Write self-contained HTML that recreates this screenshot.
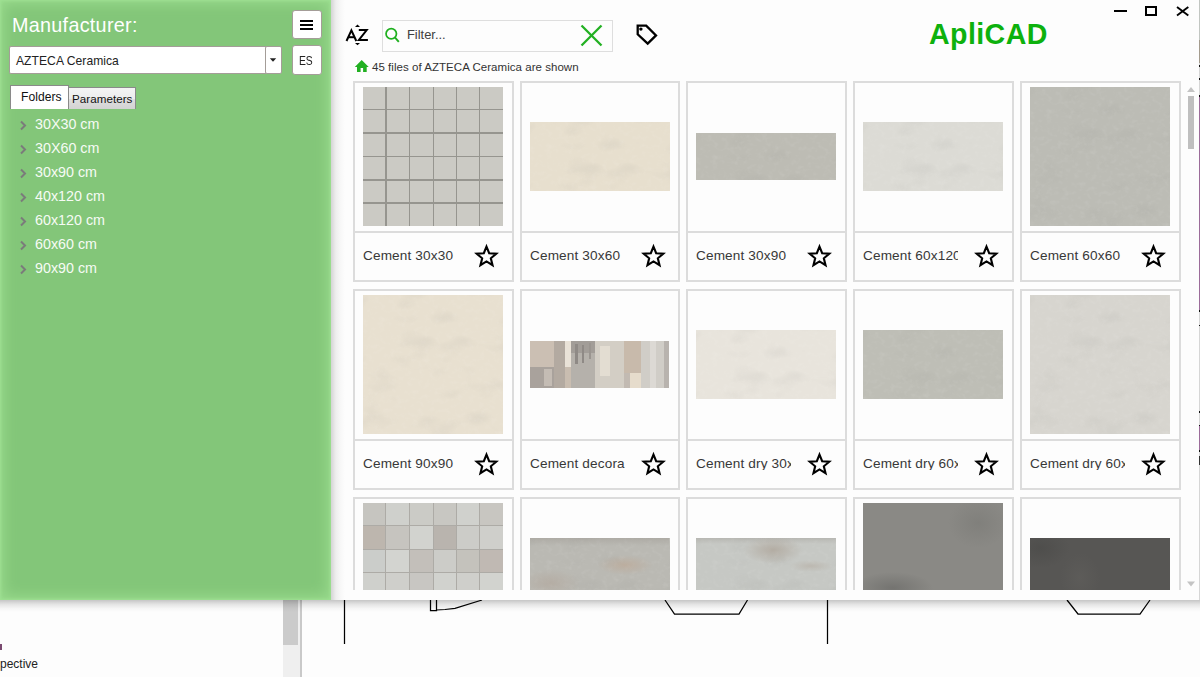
<!DOCTYPE html>
<html><head><meta charset="utf-8">
<style>
*{box-sizing:border-box;margin:0;padding:0}
html,body{width:1200px;height:677px;overflow:hidden;background:#fdfdfd;font-family:"Liberation Sans",sans-serif;position:relative}
.abs{position:absolute}
/* background app */
#bg{position:absolute;left:0;top:0;width:1200px;height:677px;background:#fdfdfd}
/* right panel */
#rp{position:absolute;left:331px;top:0;width:867px;height:600px;background:#fdfdfd;overflow:hidden}
#rpshadow{position:absolute;left:331px;top:0;width:14px;height:600px;background:linear-gradient(to right,rgba(0,0,0,.16),rgba(0,0,0,.06) 35%,rgba(0,0,0,.02) 70%,rgba(0,0,0,0))}
#botshadow{position:absolute;left:0;top:600px;width:1200px;height:12px;background:linear-gradient(to bottom,rgba(0,0,0,.22),rgba(0,0,0,.1) 35%,rgba(0,0,0,.03) 70%,rgba(0,0,0,0))}
/* green panel */
#gp{position:absolute;left:0;top:0;width:331px;height:600px;background:#83c679;box-shadow:inset 0 0 3px 1px #9fe193,inset 0 0 13px 4px #98da8c}
.txt{position:absolute;white-space:nowrap;line-height:1}
.btn{position:absolute;background:#fff;border:1.5px solid #a49d98;border-radius:3px}
.card{position:absolute;border:2px solid #dcdcdc;background:#fdfdfd}
.card .sep{position:absolute;left:0;right:0;height:2px;background:#dcdcdc}
.lbl{position:absolute;white-space:nowrap;font-size:13.6px;letter-spacing:0.14px;color:#383838;line-height:1;overflow:hidden}
.star{position:absolute}
.img{position:absolute}
</style></head><body>
<svg width="0" height="0" style="position:absolute"><defs><filter id="tex" x="0" y="0" width="100%" height="100%"><feTurbulence type="fractalNoise" baseFrequency="0.18 0.22" numOctaves="2" seed="3" result="n"/><feColorMatrix in="n" type="matrix" values="0 0 0 0 1  0 0 0 0 1  0 0 0 0 1  0 0 0 -2.2 1.15"/></filter><filter id="tex2" x="0" y="0" width="100%" height="100%"><feTurbulence type="fractalNoise" baseFrequency="0.03 0.05" numOctaves="2" seed="11" result="n"/><feColorMatrix in="n" type="matrix" values="0 0 0 0 0.3  0 0 0 0 0.3  0 0 0 0 0.28  0 0 0 2.0 -1.05"/></filter></defs></svg>
<div id="bg">
  <!-- scrollbar at bottom left -->
  <div class="abs" style="left:283px;top:600px;width:17px;height:77px;background:#efefef"></div>
  <div class="abs" style="left:283px;top:600px;width:15px;height:45px;background:#cbcbcb"></div>
  <div class="abs" style="left:300px;top:600px;width:2px;height:77px;background:#c9c9c9"></div>
  <div class="txt" style="left:0px;top:658px;font-size:12px;color:#222">pective</div>
  <div class="abs" style="left:0;top:644px;width:2px;height:6px;background:#7a4a70"></div>
  <svg class="abs" style="left:0;top:0" width="1200" height="677">
    <g stroke="#000" stroke-width="1.25" fill="none">
      <line x1="344.5" y1="600" x2="344.5" y2="644"/>
      <line x1="827.5" y1="600" x2="827.5" y2="644"/>
      <polyline points="430.5,600 430.5,610.5 436.5,610.5 436.5,600"/>
      <polyline points="436.5,610 445,609.5 455,608.3 482,600"/>
      <polyline points="665,600 674.5,614 739,614 747.5,600"/>
      <polyline points="1067,600 1078,614 1140,614 1150,600"/>
    </g>
  </svg>
</div>
<div class="abs" style="left:1199px;top:0;width:1px;height:600px;background:#d6d6d6"></div>
<div class="abs" style="left:1199px;top:0;width:1px;height:40px;background:#c2c6c2"></div>
<div class="abs" style="left:1199px;top:40px;width:1px;height:23px;background:#a49c8e"></div>
<div class="abs" style="left:1199px;top:65px;width:1px;height:2px;background:#111"></div>
<div class="abs" style="left:1199px;top:78px;width:1px;height:2px;background:#111"></div>
<div class="abs" style="left:1199px;top:95px;width:1px;height:2px;background:#111"></div>
<div class="abs" style="left:1199px;top:97px;width:1px;height:213px;background:#9c6c9a"></div>
<div class="abs" style="left:1199px;top:310px;width:1px;height:2px;background:#111"></div>
<div class="abs" style="left:1199px;top:325px;width:1px;height:1px;background:#111"></div>
<div class="abs" style="left:1199px;top:411px;width:1px;height:2px;background:#111"></div>
<div class="abs" style="left:1199px;top:425px;width:1px;height:1px;background:#111"></div>
<div class="abs" style="left:1199px;top:426px;width:1px;height:24px;background:#9c6c9a"></div>
<div class="abs" style="left:1199px;top:450px;width:1px;height:2px;background:#111"></div>
<div class="abs" style="left:1199px;top:456px;width:1px;height:9px;background:#333"></div>
<div id="botshadow"></div>

<div id="rp">
  <!-- toolbar (coords relative to 331,0) -->
  <svg class="abs" style="left:0px;top:20px" width="40" height="30" viewBox="331 20 40 30"><g fill="none" stroke="#000" stroke-width="2"><polyline points="346.5,41 351.4,30.4 356.3,41" stroke-linejoin="miter"/><line x1="348.2" y1="37.2" x2="354.6" y2="37.2"/><polyline points="358.8,30.1 366.7,30.1 358.9,39.9 367.9,39.9" stroke-linejoin="miter"/></g><polygon points="357.5,24.6 360,26.9 355,26.9" fill="#000"/><polygon points="357.5,45.3 360,43 355,43" fill="#000"/></svg>
  <div class="abs" style="left:51px;top:20px;width:231px;height:31.5px;border:1px solid #dedede;background:#fdfdfd"></div>
  <svg class="abs" style="left:52.6px;top:25.2px" width="20" height="20"><circle cx="7.25" cy="8.7" r="5.2" fill="none" stroke="#1fb01f" stroke-width="1.75"/><line x1="10.9" y1="12.4" x2="14.8" y2="16.8" stroke="#1fb01f" stroke-width="1.9"/></svg>
  <div class="txt" style="left:76px;top:29.2px;font-size:12.9px;letter-spacing:0px;color:#404040">Filter...</div>
  <svg class="abs" style="left:248px;top:23px" width="25" height="25"><g stroke="#22b022" stroke-width="2.3"><line x1="2.5" y1="2.5" x2="22.5" y2="22.5"/><line x1="22.5" y1="2.5" x2="2.5" y2="22.5"/></g></svg>
  <svg class="abs" style="left:301px;top:20px" width="30" height="30"><path d="M5.7 5.7 L14.2 5.7 L24 15.4 L15.7 23.6 L5.7 14.3 Z" fill="none" stroke="#000" stroke-width="2.3" stroke-linejoin="miter"/><circle cx="8.9" cy="9.1" r="1.7" fill="#000"/></svg>
  <svg class="abs" style="left:23px;top:58px" width="16" height="16"><path d="M0.8 9 L7.7 2 L14.7 9 L12.7 9 L12.7 13.9 L9.1 13.9 L9.1 10.1 L6.6 10.1 L6.6 13.9 L3 13.9 L3 9 Z" fill="#22b022"/></svg>
  <div class="txt" style="left:41px;top:62px;font-size:11.5px;letter-spacing:0.04px;color:#333">45 files of AZTECA Ceramica are shown</div>
  <div class="txt" style="left:598px;top:20px;font-size:28.6px;font-weight:bold;letter-spacing:0.4px;color:#0db10d">ApliCAD</div>
  <!-- window controls -->
  <div class="abs" style="left:782.5px;top:10px;width:13px;height:2px;background:#000"></div>
  <div class="abs" style="left:814px;top:6px;width:12px;height:9.5px;border:2px solid #000"></div>
  <svg class="abs" style="left:845px;top:6px" width="15" height="12"><g stroke="#000" stroke-width="1.9"><line x1="1" y1="1" x2="12.3" y2="9.6"/><line x1="12.3" y1="1" x2="1" y2="9.6"/></g></svg>
  <!-- scrollbar -->
  <svg class="abs" style="left:855px;top:86px" width="10" height="6"><polygon points="1,6 5,1 9,6" fill="#c4c4c4"/></svg>
  <div class="abs" style="left:857px;top:96px;width:6px;height:52.5px;background:#bfbfbf"></div>
  <svg class="abs" style="left:855px;top:580.8px" width="10" height="6"><polygon points="1,0.5 9,0.5 5,5.5" fill="#c4c4c4"/></svg>
  <div id="cards" class="abs" style="left:0;top:0;width:867px;height:590px;overflow:hidden">
<div class="card" style="left:22px;top:81px;width:161px;height:201px"><div class="sep" style="top:148px"></div></div>
<div class="img" style="left:32px;top:87px;width:140px;height:139px;background:#96958f;overflow:hidden"><div class="abs" style="left:0.00px;top:0.00px;width:22.10px;height:21.80px;background:#cbcac4"></div><div class="abs" style="left:23.50px;top:0.00px;width:22.25px;height:21.80px;background:#cbcac4"></div><div class="abs" style="left:47.15px;top:0.00px;width:22.45px;height:21.80px;background:#cbcac4"></div><div class="abs" style="left:71.00px;top:0.00px;width:21.80px;height:21.80px;background:#cbcac4"></div><div class="abs" style="left:94.20px;top:0.00px;width:21.80px;height:21.80px;background:#cbcac4"></div><div class="abs" style="left:117.40px;top:0.00px;width:22.60px;height:21.80px;background:#cbcac4"></div><div class="abs" style="left:0.00px;top:23.20px;width:22.10px;height:22.10px;background:#cbcac4"></div><div class="abs" style="left:23.50px;top:23.20px;width:22.25px;height:22.10px;background:#cbcac4"></div><div class="abs" style="left:47.15px;top:23.20px;width:22.45px;height:22.10px;background:#cbcac4"></div><div class="abs" style="left:71.00px;top:23.20px;width:21.80px;height:22.10px;background:#cbcac4"></div><div class="abs" style="left:94.20px;top:23.20px;width:21.80px;height:22.10px;background:#cbcac4"></div><div class="abs" style="left:117.40px;top:23.20px;width:22.60px;height:22.10px;background:#cbcac4"></div><div class="abs" style="left:0.00px;top:46.70px;width:22.10px;height:22.10px;background:#cbcac4"></div><div class="abs" style="left:23.50px;top:46.70px;width:22.25px;height:22.10px;background:#cbcac4"></div><div class="abs" style="left:47.15px;top:46.70px;width:22.45px;height:22.10px;background:#cbcac4"></div><div class="abs" style="left:71.00px;top:46.70px;width:21.80px;height:22.10px;background:#cbcac4"></div><div class="abs" style="left:94.20px;top:46.70px;width:21.80px;height:22.10px;background:#cbcac4"></div><div class="abs" style="left:117.40px;top:46.70px;width:22.60px;height:22.10px;background:#cbcac4"></div><div class="abs" style="left:0.00px;top:70.20px;width:22.10px;height:22.00px;background:#cbcac4"></div><div class="abs" style="left:23.50px;top:70.20px;width:22.25px;height:22.00px;background:#cbcac4"></div><div class="abs" style="left:47.15px;top:70.20px;width:22.45px;height:22.00px;background:#cbcac4"></div><div class="abs" style="left:71.00px;top:70.20px;width:21.80px;height:22.00px;background:#cbcac4"></div><div class="abs" style="left:94.20px;top:70.20px;width:21.80px;height:22.00px;background:#cbcac4"></div><div class="abs" style="left:117.40px;top:70.20px;width:22.60px;height:22.00px;background:#cbcac4"></div><div class="abs" style="left:0.00px;top:93.60px;width:22.10px;height:21.90px;background:#cbcac4"></div><div class="abs" style="left:23.50px;top:93.60px;width:22.25px;height:21.90px;background:#cbcac4"></div><div class="abs" style="left:47.15px;top:93.60px;width:22.45px;height:21.90px;background:#cbcac4"></div><div class="abs" style="left:71.00px;top:93.60px;width:21.80px;height:21.90px;background:#cbcac4"></div><div class="abs" style="left:94.20px;top:93.60px;width:21.80px;height:21.90px;background:#cbcac4"></div><div class="abs" style="left:117.40px;top:93.60px;width:22.60px;height:21.90px;background:#cbcac4"></div><div class="abs" style="left:0.00px;top:116.90px;width:22.10px;height:22.10px;background:#cbcac4"></div><div class="abs" style="left:23.50px;top:116.90px;width:22.25px;height:22.10px;background:#cbcac4"></div><div class="abs" style="left:47.15px;top:116.90px;width:22.45px;height:22.10px;background:#cbcac4"></div><div class="abs" style="left:71.00px;top:116.90px;width:21.80px;height:22.10px;background:#cbcac4"></div><div class="abs" style="left:94.20px;top:116.90px;width:21.80px;height:22.10px;background:#cbcac4"></div><div class="abs" style="left:117.40px;top:116.90px;width:22.60px;height:22.10px;background:#cbcac4"></div></div>
<div class="lbl" style="left:32px;top:248.5px;width:95px">Cement 30x30</div>
<svg class="star" style="left:143px;top:243px" width="26" height="26" viewBox="0 0 26 26"><polygon points="12.50,3.60 15.17,10.22 22.30,10.72 16.83,15.31 18.55,22.23 12.50,18.45 6.45,22.23 8.17,15.31 2.70,10.72 9.83,10.22" fill="none" stroke="#000" stroke-width="2.1" stroke-linejoin="miter"/></svg>
<div class="card" style="left:189px;top:81px;width:160px;height:201px"><div class="sep" style="top:148px"></div></div>
<div class="img" style="left:199px;top:122px;width:140px;height:69px;background:#e7dfce;overflow:hidden"><svg width="140" height="139" style="position:absolute;left:0;top:0"><rect width="140" height="139" filter="url(#tex2)" opacity="0.16"/><rect width="140" height="139" filter="url(#tex)" opacity="0.08"/></svg></div>
<div class="lbl" style="left:199px;top:248.5px;width:95px">Cement 30x60</div>
<svg class="star" style="left:310px;top:243px" width="26" height="26" viewBox="0 0 26 26"><polygon points="12.50,3.60 15.17,10.22 22.30,10.72 16.83,15.31 18.55,22.23 12.50,18.45 6.45,22.23 8.17,15.31 2.70,10.72 9.83,10.22" fill="none" stroke="#000" stroke-width="2.1" stroke-linejoin="miter"/></svg>
<div class="card" style="left:355px;top:81px;width:161px;height:201px"><div class="sep" style="top:148px"></div></div>
<div class="img" style="left:365px;top:133px;width:140px;height:47px;background:#bdbcb4;overflow:hidden"><svg width="140" height="139" style="position:absolute;left:0;top:0"><rect width="140" height="139" filter="url(#tex2)" opacity="0.16"/><rect width="140" height="139" filter="url(#tex)" opacity="0.08"/></svg></div>
<div class="lbl" style="left:365px;top:248.5px;width:95px">Cement 30x90</div>
<svg class="star" style="left:476px;top:243px" width="26" height="26" viewBox="0 0 26 26"><polygon points="12.50,3.60 15.17,10.22 22.30,10.72 16.83,15.31 18.55,22.23 12.50,18.45 6.45,22.23 8.17,15.31 2.70,10.72 9.83,10.22" fill="none" stroke="#000" stroke-width="2.1" stroke-linejoin="miter"/></svg>
<div class="card" style="left:522px;top:81px;width:161px;height:201px"><div class="sep" style="top:148px"></div></div>
<div class="img" style="left:532px;top:122px;width:140px;height:69px;background:#dcdbd5;overflow:hidden"><svg width="140" height="139" style="position:absolute;left:0;top:0"><rect width="140" height="139" filter="url(#tex2)" opacity="0.16"/><rect width="140" height="139" filter="url(#tex)" opacity="0.08"/></svg></div>
<div class="lbl" style="left:532px;top:248.5px;width:95px">Cement 60x120</div>
<svg class="star" style="left:643px;top:243px" width="26" height="26" viewBox="0 0 26 26"><polygon points="12.50,3.60 15.17,10.22 22.30,10.72 16.83,15.31 18.55,22.23 12.50,18.45 6.45,22.23 8.17,15.31 2.70,10.72 9.83,10.22" fill="none" stroke="#000" stroke-width="2.1" stroke-linejoin="miter"/></svg>
<div class="card" style="left:689px;top:81px;width:161px;height:201px"><div class="sep" style="top:148px"></div></div>
<div class="img" style="left:699px;top:87px;width:140px;height:139px;background:#bcbcb5;overflow:hidden"><svg width="140" height="139" style="position:absolute;left:0;top:0"><rect width="140" height="139" filter="url(#tex2)" opacity="0.16"/><rect width="140" height="139" filter="url(#tex)" opacity="0.08"/></svg></div>
<div class="lbl" style="left:699px;top:248.5px;width:95px">Cement 60x60</div>
<svg class="star" style="left:810px;top:243px" width="26" height="26" viewBox="0 0 26 26"><polygon points="12.50,3.60 15.17,10.22 22.30,10.72 16.83,15.31 18.55,22.23 12.50,18.45 6.45,22.23 8.17,15.31 2.70,10.72 9.83,10.22" fill="none" stroke="#000" stroke-width="2.1" stroke-linejoin="miter"/></svg>
<div class="card" style="left:22px;top:289px;width:161px;height:201px"><div class="sep" style="top:148px"></div></div>
<div class="img" style="left:32px;top:295px;width:140px;height:139px;background:#e8e0d0;overflow:hidden"><svg width="140" height="139" style="position:absolute;left:0;top:0"><rect width="140" height="139" filter="url(#tex2)" opacity="0.16"/><rect width="140" height="139" filter="url(#tex)" opacity="0.08"/></svg></div>
<div class="lbl" style="left:32px;top:456.5px;width:95px">Cement 90x90</div>
<svg class="star" style="left:143px;top:451px" width="26" height="26" viewBox="0 0 26 26"><polygon points="12.50,3.60 15.17,10.22 22.30,10.72 16.83,15.31 18.55,22.23 12.50,18.45 6.45,22.23 8.17,15.31 2.70,10.72 9.83,10.22" fill="none" stroke="#000" stroke-width="2.1" stroke-linejoin="miter"/></svg>
<div class="card" style="left:189px;top:289px;width:160px;height:201px"><div class="sep" style="top:148px"></div></div>
<div class="img" style="left:199px;top:341px;width:140px;height:47px;overflow:hidden"><div class="abs" style="left:0px;top:0px;width:27px;height:26px;background:#cbbfb3"></div><div class="abs" style="left:0px;top:26px;width:27px;height:21px;background:#a9a29c"></div><div class="abs" style="left:14px;top:28px;width:8px;height:17px;background:#c4bcb4"></div><div class="abs" style="left:24px;top:0px;width:11px;height:47px;background:#b3aaa1"></div><div class="abs" style="left:35px;top:0px;width:6px;height:26px;background:#e9e2d7"></div><div class="abs" style="left:35px;top:26px;width:6px;height:21px;background:#c9bdb0"></div><div class="abs" style="left:41px;top:0px;width:24px;height:47px;background:#b5b1ab"></div><div class="abs" style="left:41px;top:0px;width:24px;height:12px;background:#a29d98"></div><div class="abs" style="left:45px;top:3px;width:3px;height:20px;background:#8f8a86"></div><div class="abs" style="left:52px;top:4px;width:2px;height:18px;background:#8f8a86"></div><div class="abs" style="left:59px;top:2px;width:2px;height:16px;background:#9a9590"></div><div class="abs" style="left:65px;top:0px;width:29px;height:47px;background:#d3cec5"></div><div class="abs" style="left:70px;top:5px;width:10px;height:30px;background:#e3ddd2"></div><div class="abs" style="left:94px;top:0px;width:17px;height:32px;background:#c8baab"></div><div class="abs" style="left:94px;top:32px;width:6px;height:15px;background:#c2bab2"></div><div class="abs" style="left:100px;top:32px;width:11px;height:15px;background:#e6dccc"></div><div class="abs" style="left:111px;top:0px;width:28px;height:47px;background:#d0cdc7"></div><div class="abs" style="left:120px;top:0px;width:6px;height:47px;background:#dcd9d4"></div><div class="abs" style="left:134px;top:0px;width:5px;height:47px;background:#b8b3ae"></div></div>
<div class="lbl" style="left:199px;top:456.5px;width:95px">Cement decora</div>
<svg class="star" style="left:310px;top:451px" width="26" height="26" viewBox="0 0 26 26"><polygon points="12.50,3.60 15.17,10.22 22.30,10.72 16.83,15.31 18.55,22.23 12.50,18.45 6.45,22.23 8.17,15.31 2.70,10.72 9.83,10.22" fill="none" stroke="#000" stroke-width="2.1" stroke-linejoin="miter"/></svg>
<div class="card" style="left:355px;top:289px;width:161px;height:201px"><div class="sep" style="top:148px"></div></div>
<div class="img" style="left:365px;top:330px;width:140px;height:69px;background:#e8e4dc;overflow:hidden"><svg width="140" height="139" style="position:absolute;left:0;top:0"><rect width="140" height="139" filter="url(#tex2)" opacity="0.16"/><rect width="140" height="139" filter="url(#tex)" opacity="0.08"/></svg></div>
<div class="lbl" style="left:365px;top:456.5px;width:95px">Cement dry 30x90</div>
<svg class="star" style="left:476px;top:451px" width="26" height="26" viewBox="0 0 26 26"><polygon points="12.50,3.60 15.17,10.22 22.30,10.72 16.83,15.31 18.55,22.23 12.50,18.45 6.45,22.23 8.17,15.31 2.70,10.72 9.83,10.22" fill="none" stroke="#000" stroke-width="2.1" stroke-linejoin="miter"/></svg>
<div class="card" style="left:522px;top:289px;width:161px;height:201px"><div class="sep" style="top:148px"></div></div>
<div class="img" style="left:532px;top:330px;width:140px;height:69px;background:#bebeb6;overflow:hidden"><svg width="140" height="139" style="position:absolute;left:0;top:0"><rect width="140" height="139" filter="url(#tex2)" opacity="0.16"/><rect width="140" height="139" filter="url(#tex)" opacity="0.08"/></svg></div>
<div class="lbl" style="left:532px;top:456.5px;width:95px">Cement dry 60x120</div>
<svg class="star" style="left:643px;top:451px" width="26" height="26" viewBox="0 0 26 26"><polygon points="12.50,3.60 15.17,10.22 22.30,10.72 16.83,15.31 18.55,22.23 12.50,18.45 6.45,22.23 8.17,15.31 2.70,10.72 9.83,10.22" fill="none" stroke="#000" stroke-width="2.1" stroke-linejoin="miter"/></svg>
<div class="card" style="left:689px;top:289px;width:161px;height:201px"><div class="sep" style="top:148px"></div></div>
<div class="img" style="left:699px;top:295px;width:140px;height:139px;background:#d7d5cf;overflow:hidden"><svg width="140" height="139" style="position:absolute;left:0;top:0"><rect width="140" height="139" filter="url(#tex2)" opacity="0.16"/><rect width="140" height="139" filter="url(#tex)" opacity="0.08"/></svg></div>
<div class="lbl" style="left:699px;top:456.5px;width:95px">Cement dry 60x60</div>
<svg class="star" style="left:810px;top:451px" width="26" height="26" viewBox="0 0 26 26"><polygon points="12.50,3.60 15.17,10.22 22.30,10.72 16.83,15.31 18.55,22.23 12.50,18.45 6.45,22.23 8.17,15.31 2.70,10.72 9.83,10.22" fill="none" stroke="#000" stroke-width="2.1" stroke-linejoin="miter"/></svg>
<div class="card" style="left:22px;top:497px;width:161px;height:201px"><div class="sep" style="top:148px"></div></div>
<div class="img" style="left:32px;top:503px;width:140px;height:139px;background:#adaba6;overflow:hidden"><div class="abs" style="left:0.00px;top:0.00px;width:22.18px;height:21.98px;background:#c6c5c0"></div><div class="abs" style="left:23.43px;top:0.00px;width:22.40px;height:21.98px;background:#cfd0cc"></div><div class="abs" style="left:47.08px;top:0.00px;width:22.60px;height:21.98px;background:#cbcbc6"></div><div class="abs" style="left:70.92px;top:0.00px;width:21.95px;height:21.98px;background:#c8c7c2"></div><div class="abs" style="left:94.12px;top:0.00px;width:21.95px;height:21.98px;background:#d0d1cd"></div><div class="abs" style="left:117.33px;top:0.00px;width:22.67px;height:21.98px;background:#c8c6c1"></div><div class="abs" style="left:0.00px;top:23.23px;width:22.18px;height:22.35px;background:#bdb6ae"></div><div class="abs" style="left:23.43px;top:23.23px;width:22.40px;height:22.35px;background:#c6c4bf"></div><div class="abs" style="left:47.08px;top:23.23px;width:22.60px;height:22.35px;background:#d2d3cf"></div><div class="abs" style="left:70.92px;top:23.23px;width:21.95px;height:22.35px;background:#b9b4ae"></div><div class="abs" style="left:94.12px;top:23.23px;width:21.95px;height:22.35px;background:#ccccc8"></div><div class="abs" style="left:117.33px;top:23.23px;width:22.67px;height:22.35px;background:#cfcfcb"></div><div class="abs" style="left:0.00px;top:46.83px;width:22.18px;height:22.35px;background:#cbcdca"></div><div class="abs" style="left:23.43px;top:46.83px;width:22.40px;height:22.35px;background:#d3d4d0"></div><div class="abs" style="left:47.08px;top:46.83px;width:22.60px;height:22.35px;background:#c3bfba"></div><div class="abs" style="left:70.92px;top:46.83px;width:21.95px;height:22.35px;background:#ccccc8"></div><div class="abs" style="left:94.12px;top:46.83px;width:21.95px;height:22.35px;background:#c4c2bc"></div><div class="abs" style="left:117.33px;top:46.83px;width:22.67px;height:22.35px;background:#c0b9b3"></div><div class="abs" style="left:0.00px;top:70.42px;width:22.18px;height:22.15px;background:#cfd0cc"></div><div class="abs" style="left:23.43px;top:70.42px;width:22.40px;height:22.15px;background:#cfcfcb"></div><div class="abs" style="left:47.08px;top:70.42px;width:22.60px;height:22.15px;background:#c8c6c2"></div><div class="abs" style="left:70.92px;top:70.42px;width:21.95px;height:22.15px;background:#d1d2ce"></div><div class="abs" style="left:94.12px;top:70.42px;width:21.95px;height:22.15px;background:#cfcfcb"></div><div class="abs" style="left:117.33px;top:70.42px;width:22.67px;height:22.15px;background:#d2d3cf"></div><div class="abs" style="left:0.00px;top:93.83px;width:22.18px;height:22.15px;background:#cfd0cc"></div><div class="abs" style="left:23.43px;top:93.83px;width:22.40px;height:22.15px;background:#cfd0cc"></div><div class="abs" style="left:47.08px;top:93.83px;width:22.60px;height:22.15px;background:#cfd0cc"></div><div class="abs" style="left:70.92px;top:93.83px;width:21.95px;height:22.15px;background:#cfd0cc"></div><div class="abs" style="left:94.12px;top:93.83px;width:21.95px;height:22.15px;background:#cfd0cc"></div><div class="abs" style="left:117.33px;top:93.83px;width:22.67px;height:22.15px;background:#cfd0cc"></div><div class="abs" style="left:0.00px;top:117.22px;width:22.18px;height:21.78px;background:#cfd0cc"></div><div class="abs" style="left:23.43px;top:117.22px;width:22.40px;height:21.78px;background:#cfd0cc"></div><div class="abs" style="left:47.08px;top:117.22px;width:22.60px;height:21.78px;background:#cfd0cc"></div><div class="abs" style="left:70.92px;top:117.22px;width:21.95px;height:21.78px;background:#cfd0cc"></div><div class="abs" style="left:94.12px;top:117.22px;width:21.95px;height:21.78px;background:#cfd0cc"></div><div class="abs" style="left:117.33px;top:117.22px;width:22.67px;height:21.78px;background:#cfd0cc"></div></div>
<div class="card" style="left:189px;top:497px;width:160px;height:201px"><div class="sep" style="top:148px"></div></div>
<div class="img" style="left:199px;top:538px;width:140px;height:69px;background:#bab9b3;overflow:hidden"><svg width="140" height="139" style="position:absolute;left:0;top:0"><rect width="140" height="139" filter="url(#tex2)" opacity="0.16"/><rect width="140" height="139" filter="url(#tex)" opacity="0.08"/></svg></div>
<div class="card" style="left:355px;top:497px;width:161px;height:201px"><div class="sep" style="top:148px"></div></div>
<div class="img" style="left:365px;top:538px;width:140px;height:69px;background:#c6c8c4;overflow:hidden"><svg width="140" height="139" style="position:absolute;left:0;top:0"><rect width="140" height="139" filter="url(#tex2)" opacity="0.16"/><rect width="140" height="139" filter="url(#tex)" opacity="0.08"/></svg></div>
<div class="card" style="left:522px;top:497px;width:161px;height:201px"><div class="sep" style="top:148px"></div></div>
<div class="img" style="left:532px;top:503px;width:140px;height:139px;background:#8a8985"></div>
<div class="card" style="left:689px;top:497px;width:161px;height:201px"><div class="sep" style="top:148px"></div></div>
<div class="img" style="left:699px;top:538px;width:140px;height:69px;background:#575654"></div>
<div class="img" style="left:199px;top:538px;width:139px;height:52px;background:radial-gradient(ellipse 28px 10px at 95px 27px, rgba(190,160,135,.45), rgba(190,160,135,0)), radial-gradient(ellipse 30px 14px at 20px 45px, rgba(170,150,135,.35), rgba(170,150,135,0)), linear-gradient(rgba(150,145,138,.35), rgba(150,145,138,0) 8px)"></div>
<div class="img" style="left:365px;top:538px;width:140px;height:52px;background:radial-gradient(ellipse 30px 14px at 77px 12px, rgba(160,145,130,.5), rgba(160,145,130,0)), radial-gradient(ellipse 22px 6px at 115px 28px, rgba(170,155,140,.35), rgba(170,155,140,0)), linear-gradient(rgba(150,145,138,.3), rgba(150,145,138,0) 6px)"></div>
<div class="img" style="left:532px;top:503px;width:140px;height:87px;background:radial-gradient(ellipse 40px 16px at 30px 85px, rgba(90,90,88,.45), rgba(90,90,88,0)), radial-gradient(ellipse 30px 25px at 115px 20px, rgba(110,110,106,.35), rgba(110,110,106,0))"></div>
<div class="img" style="left:699px;top:538px;width:140px;height:52px;background:radial-gradient(ellipse 30px 20px at 10px 10px, rgba(70,70,68,.5), rgba(70,70,68,0)), radial-gradient(ellipse 20px 25px at 50px 40px, rgba(110,108,104,.25), rgba(110,108,104,0))"></div>
</div>
</div>
</div>
</div>
</div>
</div>
</div>
</div>
</div>
</div>
</div>
</div>
</div>
</div>
</div>
</div>
</div>
</div>
</div>
</div>
<div id="rpshadow"></div>

<div id="gp">
  <div class="txt" style="left:12px;top:16.3px;font-size:19.8px;letter-spacing:0.28px;color:#fff">Manufacturer:</div>
  <div class="btn" style="left:292px;top:10px;width:30px;height:29px">
    <div class="abs" style="left:7px;top:8.5px;width:13px;height:2px;background:#000"></div>
    <div class="abs" style="left:7px;top:12.5px;width:13px;height:2px;background:#000"></div>
    <div class="abs" style="left:7px;top:16.5px;width:13px;height:2px;background:#000"></div>
  </div>
  <div class="btn" style="left:9px;top:46px;width:256.5px;height:28px;border-radius:2px;border-right:none;border-top-right-radius:0;border-bottom-right-radius:0"></div>
  <div class="txt" style="left:16px;top:55px;font-size:12.1px;letter-spacing:0.05px;color:#222">AZTECA Ceramica</div>
  <div class="btn" style="left:265px;top:46px;width:17px;height:28px;border-radius:2px"></div>
  <svg class="abs" style="left:268px;top:57px" width="10" height="6"><polygon points="1.8,1.2 8.2,1.2 5,4.8" fill="#222"/></svg>
  <div class="btn" style="left:292px;top:45px;width:30px;height:30px">
    <div class="txt" style="left:6.3px;top:8.6px;font-size:12.6px;letter-spacing:-0.2px;color:#222;transform:scaleX(0.82);transform-origin:0 0">ES</div>
  </div>
  <!-- tabs -->
  <div class="abs" style="left:68px;top:87px;width:68px;height:21.5px;border:1px solid #8a8a8a;border-bottom:none;background:linear-gradient(#f4f4f4,#ededed 50%,#dedede 54%,#d3d3d3)"></div>
  <div class="txt" style="left:72px;top:92.8px;font-size:11.6px;letter-spacing:0.05px;color:#111">Parameters</div>
  <div class="abs" style="left:10px;top:85px;width:59px;height:24px;border:1px solid #8a8a8a;border-bottom:none;background:#fff"></div>
  <div class="txt" style="left:21px;top:90.6px;font-size:12.1px;letter-spacing:0.05px;color:#111">Folders</div>
  <!-- tree -->
  <svg class="abs" style="left:19px;top:119.5px" width="8" height="11"><polyline points="2,1.5 6,5.5 2,9.5" fill="none" stroke="#7b7b7b" stroke-width="2"/></svg><div class="txt" style="left:35px;top:116.5px;font-size:14.3px;color:#f6fbf5">30X30 cm</div>
<svg class="abs" style="left:19px;top:143.5px" width="8" height="11"><polyline points="2,1.5 6,5.5 2,9.5" fill="none" stroke="#7b7b7b" stroke-width="2"/></svg><div class="txt" style="left:35px;top:140.5px;font-size:14.3px;color:#f6fbf5">30X60 cm</div>
<svg class="abs" style="left:19px;top:167.5px" width="8" height="11"><polyline points="2,1.5 6,5.5 2,9.5" fill="none" stroke="#7b7b7b" stroke-width="2"/></svg><div class="txt" style="left:35px;top:164.5px;font-size:14.3px;color:#f6fbf5">30x90 cm</div>
<svg class="abs" style="left:19px;top:191.5px" width="8" height="11"><polyline points="2,1.5 6,5.5 2,9.5" fill="none" stroke="#7b7b7b" stroke-width="2"/></svg><div class="txt" style="left:35px;top:188.5px;font-size:14.3px;color:#f6fbf5">40x120 cm</div>
<svg class="abs" style="left:19px;top:215.5px" width="8" height="11"><polyline points="2,1.5 6,5.5 2,9.5" fill="none" stroke="#7b7b7b" stroke-width="2"/></svg><div class="txt" style="left:35px;top:212.5px;font-size:14.3px;color:#f6fbf5">60x120 cm</div>
<svg class="abs" style="left:19px;top:239.5px" width="8" height="11"><polyline points="2,1.5 6,5.5 2,9.5" fill="none" stroke="#7b7b7b" stroke-width="2"/></svg><div class="txt" style="left:35px;top:236.5px;font-size:14.3px;color:#f6fbf5">60x60 cm</div>
<svg class="abs" style="left:19px;top:263.5px" width="8" height="11"><polyline points="2,1.5 6,5.5 2,9.5" fill="none" stroke="#7b7b7b" stroke-width="2"/></svg><div class="txt" style="left:35px;top:260.5px;font-size:14.3px;color:#f6fbf5">90x90 cm</div>

</div>
</body></html>
